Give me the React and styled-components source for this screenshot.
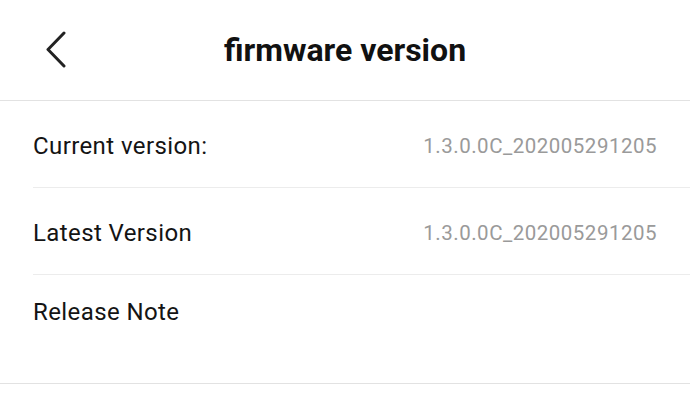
import React from "react";
import styled, { createGlobalStyle } from "styled-components";

const Global = createGlobalStyle`
  html, body { margin: 0; padding: 0; background: #fff; }
  body { font-family: Roboto, "Noto Sans", sans-serif; color: #111; }
`;

const Page = styled.div`
  width: 690px;
  min-height: 401px;
  background: #fff;
`;

const Header = styled.header`
  height: 101px;
  border-bottom: 1px solid #e2e2e2;
  display: grid;
  grid-template-columns: 100px 1fr 100px;
  align-items: center;
  box-sizing: border-box;
`;

const BackButton = styled.button`
  border: 0;
  background: none;
  padding: 0 0 0 44px;
  height: 100%;
  display: flex;
  align-items: center;
  cursor: pointer;
`;

const Title = styled.h1`
  margin: 0;
  text-align: center;
  font-size: 32px;
  font-weight: 700;
  color: #111;
`;

const List = styled.div`
  border-bottom: 1px solid #e2e2e2;
`;

const Row = styled.div`
  margin-left: 33px;
  height: ${(p) => p.$h}px;
  padding-top: ${(p) => p.$pt || 0}px;
  box-sizing: border-box;
  display: flex;
  align-items: ${(p) => (p.$top ? "flex-start" : "center")};
  justify-content: space-between;
  padding-right: 33px;
  border-bottom: ${(p) => (p.$last ? "none" : "1px solid #ececec")};
`;

const Label = styled.span`
  font-size: 24px;
  letter-spacing: 0.4px;
  line-height: 28px;
  color: #141414;
`;

const Value = styled.span`
  font-size: 20.5px;
  letter-spacing: 0.5px;
  line-height: 24px;
  color: #9a9a9a;
`;

const Chevron = () => (
  <svg width="26" height="38" viewBox="0 0 26 38" fill="none">
    <path d="M20 2 L4 18.5 L20 35" stroke="#222" strokeWidth="3" strokeLinecap="round" strokeLinejoin="round" />
  </svg>
);

export default function App() {
  return (
    <Page>
      <Global />
      <Header>
        <BackButton aria-label="back">
          <Chevron />
        </BackButton>
        <Title>firmware version</Title>
        <span />
      </Header>
      <List>
        <Row $h={87} $pt={4}>
          <Label>Current version:</Label>
          <Value>1.3.0.0C_202005291205</Value>
        </Row>
        <Row $h={87} $pt={4}>
          <Label>Latest Version</Label>
          <Value>1.3.0.0C_202005291205</Value>
        </Row>
        <Row $h={108} $top $pt={23} $last>
          <Label>Release Note</Label>
        </Row>
      </List>
    </Page>
  );
}
